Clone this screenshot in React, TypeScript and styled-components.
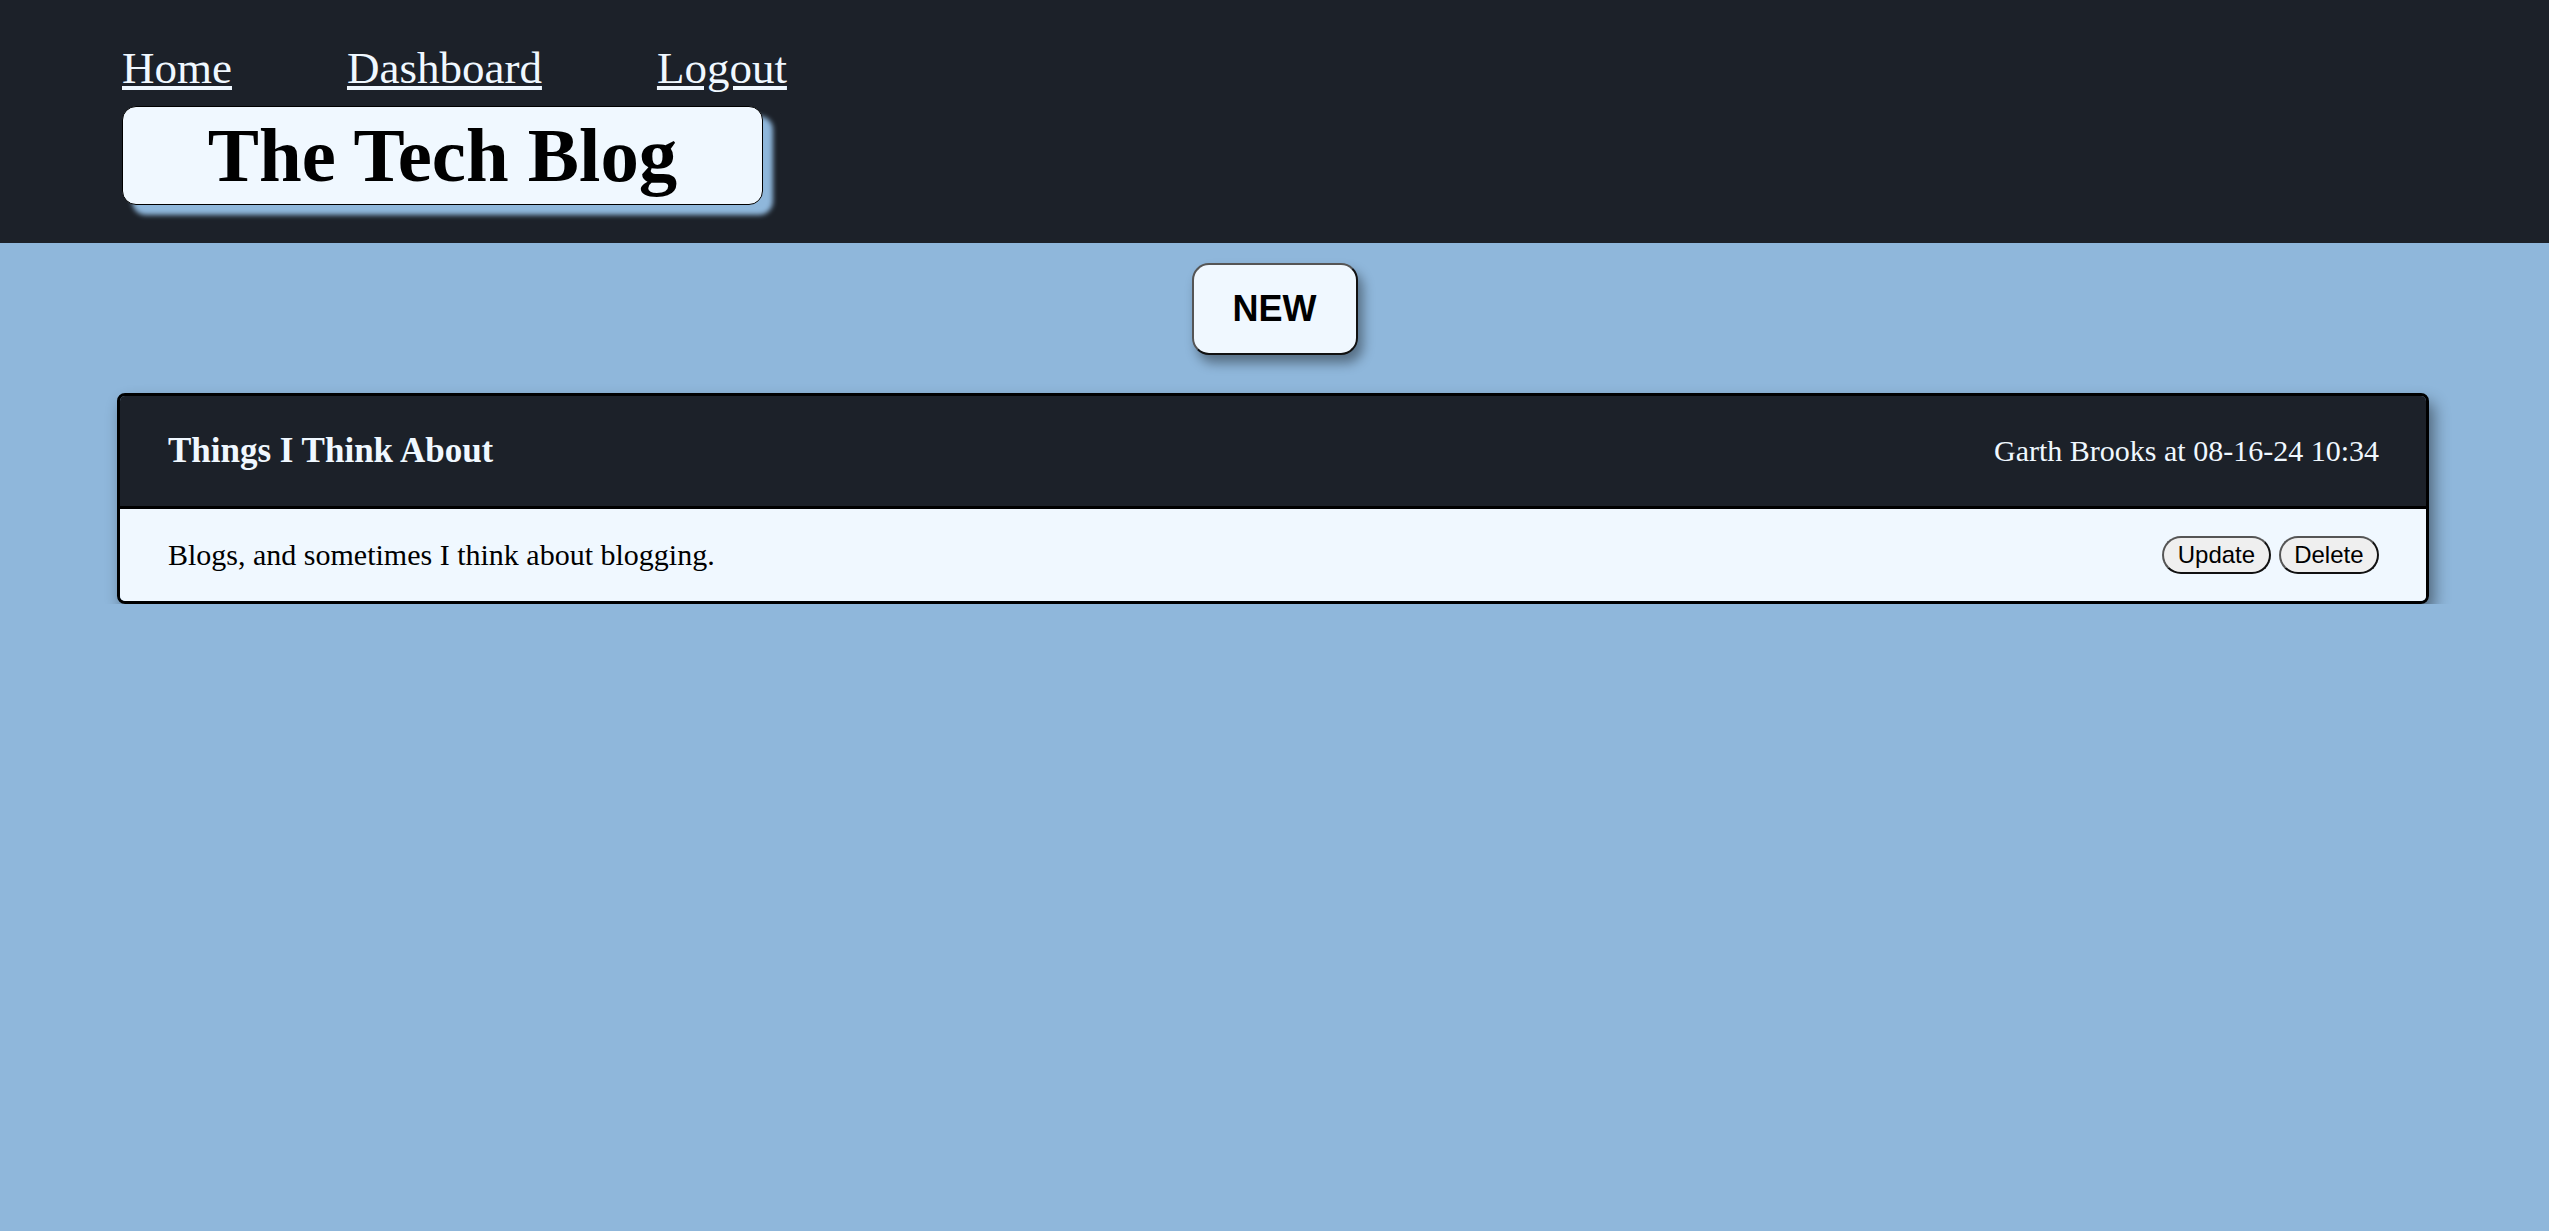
import React from "react";
import styled, { createGlobalStyle } from "styled-components";

const GlobalStyle = createGlobalStyle`
  html, body {
    margin: 0;
    padding: 0;
    background: #8fb7db;
    font-family: "Liberation Serif", "Times New Roman", serif;
  }
  * { box-sizing: border-box; }
`;

const Header = styled.header`
  background: #1c2129;
  height: 243px;
  padding: 42px 0 0 122px;
`;

const Nav = styled.nav`
  display: flex;
  gap: 115px;
  font-size: 45px;
  line-height: normal;
`;

const NavLink = styled.a`
  color: #f0f8ff;
  text-decoration: underline;
  cursor: pointer;
`;

const TitleBox = styled.h1`
  width: 641px;
  margin: 12px 0 0 0;
  padding: 5px 0 4px;
  background: #f0f8ff;
  border: 1px solid #000;
  border-radius: 14px;
  box-shadow: 10px 10px 5px #8fb7db;
  text-align: center;
  font-size: 76.8px;
  font-weight: bold;
  line-height: normal;
  color: #000;
`;

const Main = styled.main`
  padding-top: 20px;
`;

const NewRow = styled.div`
  display: flex;
  justify-content: center;
  margin-bottom: 38px;
`;

const NewButton = styled.button`
  font-family: "Liberation Sans", Arial, sans-serif;
  font-size: 36px;
  font-weight: bold;
  line-height: normal;
  color: #000;
  background: #f0f8ff;
  padding: 23px 39px;
  border: 2px solid;
  border-color: #555 #111 #111 #555;
  border-radius: 17px;
  box-shadow: 5px 8px 12px rgba(0, 0, 0, 0.4);
  cursor: pointer;
`;

const Card = styled.section`
  margin: 0 120px 0 117px;
  border: 3px solid #000;
  border-radius: 8px;
  overflow: hidden;
  box-shadow: 5px 9px 16px rgba(0, 0, 0, 0.45);
`;

const CardHeader = styled.div`
  background: #1c2129;
  color: #f0f8ff;
  height: 113px;
  padding: 0 47px 0 48px;
  display: flex;
  align-items: center;
  justify-content: space-between;
  border-bottom: 3px solid #000;
`;

const PostTitle = styled.h2`
  margin: 0;
  font-size: 35px;
  font-weight: bold;
`;

const Meta = styled.span`
  font-size: 30px;
`;

const CardBody = styled.div`
  background: #f0f8ff;
  height: 92px;
  padding: 0 47px 0 48px;
  display: flex;
  align-items: center;
  justify-content: space-between;
  font-size: 30px;
  color: #000;
`;

const Actions = styled.div`
  display: flex;
  gap: 8px;
`;

const PillButton = styled.button`
  font-family: "Liberation Sans", Arial, sans-serif;
  font-size: 24px;
  line-height: normal;
  color: #000;
  background: #efefef;
  padding: 3px 13.5px;
  border: 2px solid;
  border-color: #555 #111 #111 #555;
  border-radius: 20px;
  cursor: pointer;
`;

export default function App() {
  return (
    <>
      <GlobalStyle />
      <Header>
        <Nav>
          <NavLink>Home</NavLink>
          <NavLink>Dashboard</NavLink>
          <NavLink>Logout</NavLink>
        </Nav>
        <TitleBox>The Tech Blog</TitleBox>
      </Header>
      <Main>
        <NewRow>
          <NewButton>NEW</NewButton>
        </NewRow>
        <Card>
          <CardHeader>
            <PostTitle>Things I Think About</PostTitle>
            <Meta>Garth Brooks at 08-16-24 10:34</Meta>
          </CardHeader>
          <CardBody>
            <span>Blogs, and sometimes I think about blogging.</span>
            <Actions>
              <PillButton>Update</PillButton>
              <PillButton>Delete</PillButton>
            </Actions>
          </CardBody>
        </Card>
      </Main>
    </>
  );
}
